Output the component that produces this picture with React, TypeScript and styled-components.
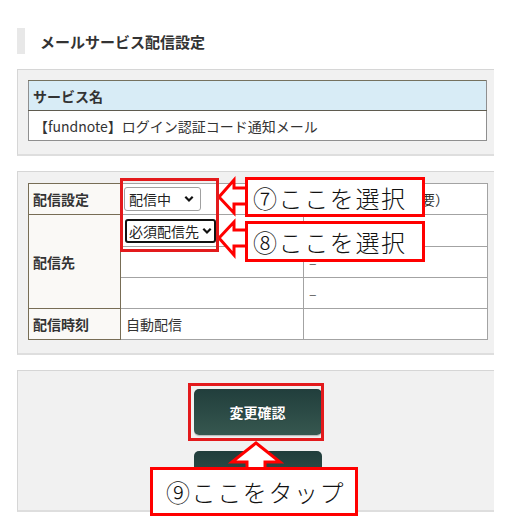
import styled, { createGlobalStyle } from "styled-components";

// ── GLOBAL ──────────────────────────────

const GlobalStyle = createGlobalStyle`
  body {
    margin: 0;
    background: #ffffff;
    font-family: "Noto Sans CJK JP", "Noto Sans", sans-serif;
    color: #333333;
  }
`;

const Page = styled.div`
  position: relative;
  width: 511px;
  height: 528px;
  overflow: hidden;
`;

const Content = styled.div`
  display: flex;
  flex-direction: column;
  gap: 15px;
  width: 477px;
  margin-left: 17px;
  padding-top: 28px;
`;

const Heading = styled.h2`
  margin: 0;
  height: 26px;
  display: flex;
  align-items: center;
  border-left: 8px solid #e8e8e8;
  padding-left: 15px;
  font-size: 15px;
  font-weight: 700;
  color: #333333;
`;

const Panel = styled.section<{ $padTop?: number }>`
  background: #f1f1f1;
  border-top: 1px solid #d6d6d6;
  border-left: 1px solid #d6d6d6;
  border-bottom: 2px solid #dedede;
  padding: ${({ $padTop }) => $padTop ?? 10}px 7px 13px 10px;
`;

// ── TABLES ──────────────────────────────

const Table = styled.table`
  width: 459px;
  border-collapse: collapse;
  background: #ffffff;
  font-size: 14px;
  table-layout: fixed;
`;

const Row = styled.tr<{ $h?: number }>`
  & > th,
  & > td {
    height: ${({ $h }) => $h ?? 29}px;
  }
`;

const HeadCell = styled.th`
  padding: 0 4px;
  text-align: left;
  font-weight: 700;
  background: #d8ecf6;
  border: 1px solid #8f8f8f;
  border-bottom-color: #5f5b4f;
  border-top-color: #75715f;
`;

const Cell = styled.td<{ $muted?: boolean }>`
  padding: 0 5px;
  border: 1px solid #a3a3a3;
  color: ${({ $muted }) => ($muted ? "#666666" : "#333333")};
  white-space: nowrap;
  overflow: hidden;
`;

const LabelCell = styled.th`
  padding: 0 4px;
  text-align: left;
  font-weight: 700;
  background: #faf9f6;
  border: 1px solid #776d55;
`;

// ── SELECT ──────────────────────────────

const SelectBox = styled.div<{ $w: number; $focus?: boolean }>`
  position: relative;
  display: inline-flex;
  align-items: center;
  box-sizing: border-box;
  width: ${({ $w }) => $w}px;
  height: 24px;
  padding-left: ${({ $focus }) => ($focus ? 2 : 4)}px;
  border: ${({ $focus }) => ($focus ? "2px solid #111111" : "1px solid #a0a0a0")};
  border-radius: 3px;
  background: #ffffff;
  color: #222222;
  font-size: 14px;
  vertical-align: middle;

  svg {
    position: absolute;
    right: ${({ $focus }) => ($focus ? 2 : 6)}px;
    top: 50%;
    transform: translateY(-50%);
  }
`;

const Chevron = () => (
  <svg width="10" height="7" viewBox="0 0 10 7">
    <path d="M1.3 1.3 L5 5 L8.7 1.3" fill="none" stroke="#111" strokeWidth="2.2" />
  </svg>
);

// ── BUTTONS ─────────────────────────────

const Buttons = styled.div`
  display: flex;
  flex-direction: column;
  align-items: center;
  gap: 16px;
  padding-top: 8px;
`;

const Button = styled.button`
  width: 128px;
  height: 46px;
  border: none;
  border-radius: 5px;
  background: linear-gradient(#213e3c, #36574f);
  box-shadow: 0 1px 0 #bdbdbd, 0 2px 0 #e4e4e4;
  color: #ffffff;
  font-family: "Noto Sans CJK JP", sans-serif;
  font-size: 14px;
  font-weight: 700;
  text-shadow: 0 0 1px rgba(0, 0, 0, 0.5);
`;

// ── ANNOTATIONS ─────────────────────────

const Overlay = styled.svg`
  position: absolute;
  left: 0;
  top: 0;
  pointer-events: none;
`;

const Note = styled.div<{ $x: number; $y: number; $w: number; $h: number; $pad: number }>`
  position: absolute;
  left: ${({ $x }) => $x}px;
  top: ${({ $y }) => $y}px;
  width: ${({ $w }) => $w}px;
  height: ${({ $h }) => $h}px;
  display: flex;
  align-items: center;
  padding-left: ${({ $pad }) => $pad}px;
  box-sizing: border-box;
  font-family: "Noto Sans CJK JP Light", "Noto Sans CJK JP DemiLight", "Noto Sans CJK JP", sans-serif;
  font-size: 24px;
  font-weight: 300;
  letter-spacing: 1.6px;
  color: #111111;
  pointer-events: none;
`;

export default function App() {
  return (
    <>
      <GlobalStyle />
      <Page>
        <Content>
          <Heading>メールサービス配信設定</Heading>

          <Panel>
            <Table>
              <thead>
                <Row>
                  <HeadCell>サービス名</HeadCell>
                </Row>
              </thead>
              <tbody>
                <Row>
                  <Cell style={{ borderColor: "#8f8f8f" }}>【fundnote】ログイン認証コード通知メール</Cell>
                </Row>
              </tbody>
            </Table>
          </Panel>

          <Panel $padTop={11}>
            <Table>
              <colgroup>
                <col style={{ width: 92 }} />
                <col style={{ width: 183 }} />
                <col style={{ width: 184 }} />
              </colgroup>
              <tbody>
                <Row $h={30}>
                  <LabelCell>配信設定</LabelCell>
                  <Cell style={{ paddingLeft: 3 }}>
                    <SelectBox $w={77}>
                      配信中
                      <Chevron />
                    </SelectBox>
                  </Cell>
                  <Cell>（停止時は設定必要）</Cell>
                </Row>
                <Row $h={31}>
                  <LabelCell rowSpan={3}>配信先</LabelCell>
                  <Cell style={{ paddingLeft: 4 }}>
                    <SelectBox $w={91} $focus>
                      必須配信先
                      <Chevron />
                    </SelectBox>
                  </Cell>
                  <Cell $muted>–</Cell>
                </Row>
                <Row $h={30}>
                  <Cell />
                  <Cell $muted>–</Cell>
                </Row>
                <Row $h={30}>
                  <Cell />
                  <Cell $muted>–</Cell>
                </Row>
                <Row $h={30}>
                  <LabelCell>配信時刻</LabelCell>
                  <Cell>自動配信</Cell>
                  <Cell />
                </Row>
              </tbody>
            </Table>
          </Panel>

          <Panel>
            <Buttons>
              <Button>変更確認</Button>
              <Button>戻る</Button>
            </Buttons>
          </Panel>
        </Content>

        <Overlay width="511" height="528" viewBox="0 0 511 528">
          <g fill="#ffffff" stroke="#ff0000" strokeWidth="3" strokeLinejoin="miter">
            <polygon points="247,188 234,188 234,180 219,197 234,213 234,204 247,204" />
            <polygon points="247,230 234,230 234,222 219,238 234,255 234,246 247,246" />
            <polygon points="247,469 247,462 232,462 256,443 280,462 265,462 265,469" />
            <rect x="246.5" y="178.5" width="177" height="37" />
            <rect x="246.5" y="222.5" width="177" height="38" />
            <rect x="151.5" y="468.5" width="205" height="46" />
          </g>
          <g fill="none" stroke="#e31a1c" strokeWidth="3">
            <rect x="121.5" y="179.5" width="96" height="71" />
            <rect x="189.5" y="384.5" width="133" height="55" />
          </g>
        </Overlay>

        <Note $x={245} $y={177} $w={180} $h={40} $pad={8}>⑦ここを選択</Note>
        <Note $x={245} $y={221} $w={180} $h={41} $pad={8}>⑧ここを選択</Note>
        <Note $x={150} $y={467} $w={208} $h={49} $pad={16}>⑨ここをタップ</Note>
      </Page>
    </>
  );
}
